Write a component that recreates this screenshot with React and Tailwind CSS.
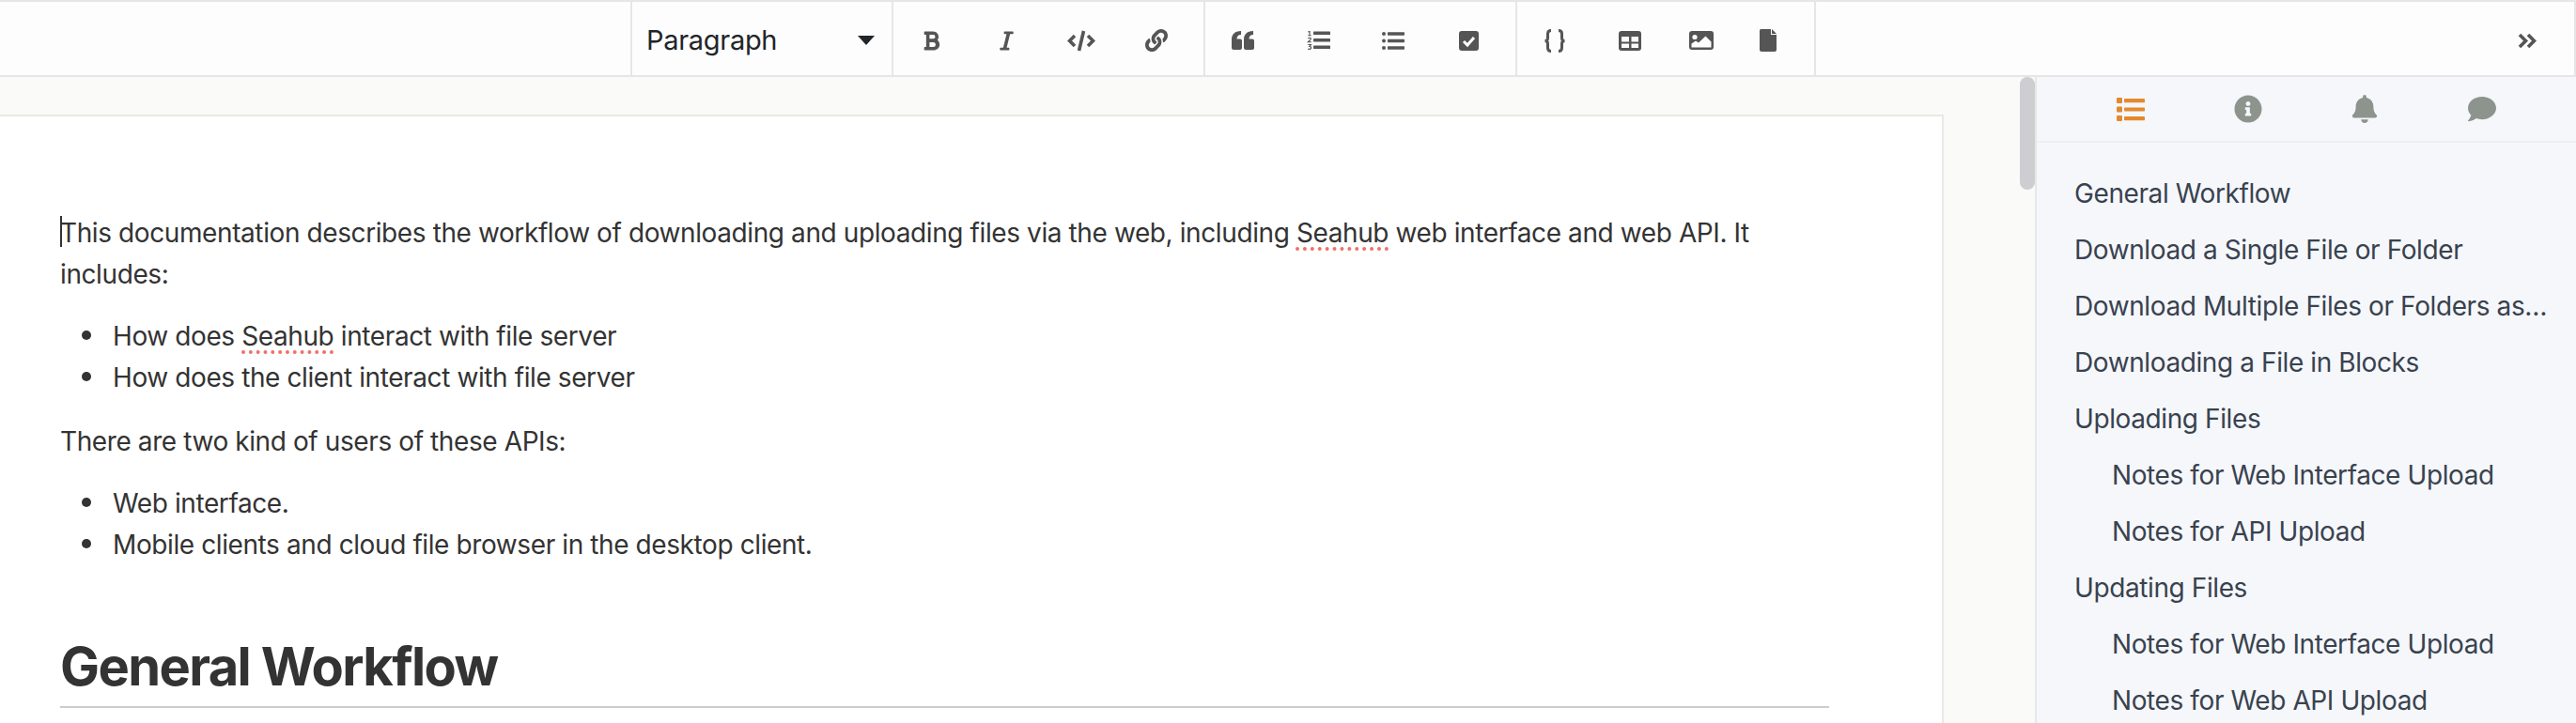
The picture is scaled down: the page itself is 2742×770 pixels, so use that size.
import React from "react";
import { FaBold, FaItalic, FaLink, FaInfoCircle, FaBell, FaComment } from "react-icons/fa";

const Btn = ({ w = "w-[80px]", children }) => (
  <button className={`${w} h-full flex items-center justify-center text-[#555555]`}>{children}</button>
);

const Code = () => (
  <svg width="30" height="23" viewBox="0 0 30 23" fill="none" stroke="currentColor" strokeWidth="3.6" strokeLinejoin="miter">
    <path d="M8 6 L2.5 11.5 L8 17" /><path d="M22 6 L27.5 11.5 L22 17" /><path d="M17.5 1 L12.5 22" />
  </svg>
);
const Quote = () => (
  <svg width="24" height="20" viewBox="0 0 24 20" fill="currentColor">
    <path d="M0 9 C0 4 3 0 10 0 V4 C7 4 5.5 6 5.5 8.5 H9 a2 2 0 0 1 2 2 V18 a2 2 0 0 1 -2 2 H2 a2 2 0 0 1 -2 -2 Z" />
    <path d="M13 9 C13 4 16 0 23 0 V4 C20 4 18.5 6 18.5 8.5 H22 a2 2 0 0 1 2 2 V18 a2 2 0 0 1 -2 2 H15 a2 2 0 0 1 -2 -2 Z" />
  </svg>
);
const ListOl = () => (
  <svg width="25" height="20" viewBox="0 0 25 20" fill="currentColor">
    <rect x="7" y="0.6" width="18" height="3.4" rx="0.6" /><rect x="7" y="8" width="18" height="3.4" rx="0.6" /><rect x="7" y="15.6" width="18" height="3.4" rx="0.6" />
    <path d="M1.5 1 L3 0 V4.5 M1.3 4.8 H4.7" stroke="currentColor" strokeWidth="1.1" fill="none" />
    <path d="M1.3 8 Q3 6.6 4.4 7.8 Q4.8 9 1.3 11.8 H4.8" stroke="currentColor" strokeWidth="1.1" fill="none" />
    <path d="M1.3 14.5 H4.5 L2.8 16.4 Q5.2 16.6 4.6 18.4 Q3.4 20 1.2 18.9" stroke="currentColor" strokeWidth="1.1" fill="none" />
  </svg>
);
const ListUl = () => (
  <svg width="24" height="19" viewBox="0 0 24 19" fill="currentColor">
    <circle cx="2" cy="2" r="2" /><circle cx="2" cy="9.5" r="2" /><circle cx="2" cy="17" r="2" />
    <rect x="6" y="0.3" width="18" height="3.4" rx="0.6" /><rect x="6" y="7.8" width="18" height="3.4" rx="0.6" /><rect x="6" y="15.3" width="18" height="3.4" rx="0.6" />
  </svg>
);
const Check = () => (
  <svg width="21" height="21" viewBox="0 0 21 21">
    <rect width="21" height="21" rx="3" fill="currentColor" />
    <path d="M5 11 L9 15 L16 7" fill="none" stroke="#ffffff" strokeWidth="3" />
  </svg>
);
const Braces = () => (
  <svg width="24" height="25" viewBox="0 0 24 25" fill="none" stroke="currentColor" strokeWidth="3">
    <path d="M8 1.5 C5 1.5 4.5 3 4.5 5 V9.5 C4.5 11.5 3.5 12.5 1.5 12.5 C3.5 12.5 4.5 13.5 4.5 15.5 V20 C4.5 22 5 23.5 8 23.5" />
    <path d="M16 1.5 C19 1.5 19.5 3 19.5 5 V9.5 C19.5 11.5 20.5 12.5 22.5 12.5 C20.5 12.5 19.5 13.5 19.5 15.5 V20 C19.5 22 19 23.5 16 23.5" />
  </svg>
);
const TableIcon = () => (
  <svg width="24" height="21" viewBox="0 0 24 21">
    <rect width="24" height="21" rx="3" fill="currentColor" />
    <g fill="#fdfdfd"><rect x="3" y="6" width="8" height="5.5" /><rect x="13.5" y="6" width="7.5" height="5.5" /><rect x="3" y="13.5" width="8" height="4.5" /><rect x="13.5" y="13.5" width="7.5" height="4.5" /></g>
  </svg>
);
const ImageIcon = () => (
  <svg width="26" height="20" viewBox="0 0 26 20">
    <rect width="26" height="20" rx="3" fill="currentColor" />
    <circle cx="6" cy="6.5" r="2.6" fill="#fdfdfd" />
    <path d="M2.5 17.5 V13.5 L7 10.5 L10 12.5 L17.5 5.5 L23.5 11.5 V17.5 Z" fill="#fdfdfd" />
  </svg>
);
const FileIcon = () => (
  <svg width="18" height="24" viewBox="0 0 18 24" fill="currentColor">
    <path d="M1.5 0 H12 V6 H18 V22 a2 2 0 0 1 -2 2 H2 a2 2 0 0 1 -2 -2 V1.5 a1.5 1.5 0 0 1 1.5 -1.5 Z" />
    <path d="M13 0 L18 5 H13 Z" />
  </svg>
);
const Chevrons = () => (
  <svg width="20" height="17" viewBox="0 0 20 17" fill="none" stroke="currentColor" strokeWidth="3.6">
    <path d="M2 2 L8.5 8.5 L2 15" /><path d="M11 2 L17.5 8.5 L11 15" />
  </svg>
);
const TocIcon = () => (
  <svg width="30" height="25" viewBox="0 0 30 25" fill="currentColor">
    <rect x="0" y="0" width="6" height="6" rx="1" /><rect x="0" y="9.5" width="6" height="6" rx="1" /><rect x="0" y="19" width="6" height="6" rx="1" />
    <rect x="8" y="1" width="22" height="4.2" rx="0.8" /><rect x="8" y="10.4" width="22" height="4.2" rx="0.8" /><rect x="8" y="20" width="22" height="4.2" rx="0.8" />
  </svg>
);

const Spell = ({ children }) => (
  <span className="underline decoration-dotted decoration-[#f0706a] decoration-[4px] underline-offset-[5px] [text-decoration-skip-ink:none]">{children}</span>
);

const Bullet = ({ children }) => (
  <li className="flex">
    <span className="w-[56px] shrink-0 pl-[23px] pt-[16px]"><span className="block w-[10px] h-[10px] rounded-full bg-[#333333]" /></span>
    <span>{children}</span>
  </li>
);

const toc = [
  ["General Workflow", 0],
  ["Download a Single File or Folder", 0],
  ["Download Multiple Files or Folders as a Zip", 0],
  ["Downloading a File in Blocks", 0],
  ["Uploading Files", 0],
  ["Notes for Web Interface Upload", 1],
  ["Notes for API Upload", 1],
  ["Updating Files", 0],
  ["Notes for Web Interface Upload", 1],
  ["Notes for Web API Upload", 1],
];

export default function App() {
  return (
    <div className="w-[2742px] h-[770px] overflow-hidden flex flex-col bg-[#fafaf8] font-['Inter','Noto_Sans',sans-serif]">
      <div className="h-[82px] shrink-0 flex bg-[#fdfdfd] border-t-2 border-b-2 border-r-2 border-[#e6e6e6]">
        <div className="w-[671px]" />
        <div className="w-[278px] border-l-2 border-[#e6e6e6] flex items-center pt-[4px] pl-[15px] pr-[18px] justify-between">
          <span className="text-[29px] tracking-[-0.3px] text-[#212529]">Paragraph</span>
          <span className="w-0 h-0 border-l-[9px] border-r-[9px] border-t-[10px] border-l-transparent border-r-transparent border-t-[#212529]" />
        </div>
        <div className="w-[332px] border-l-2 border-[#e6e6e6] flex pt-[4px]">
          <Btn><FaBold className="text-[23px]" /></Btn>
          <Btn><FaItalic className="text-[23px]" /></Btn>
          <Btn><Code /></Btn>
          <Btn><FaLink className="text-[24px]" /></Btn>
        </div>
        <div className="w-[332px] border-l-2 border-[#e6e6e6] flex pt-[4px]">
          <Btn><Quote /></Btn>
          <Btn><ListOl /></Btn>
          <Btn><ListUl /></Btn>
          <Btn><Check /></Btn>
        </div>
        <div className="w-[320px] border-l-2 border-r-2 border-[#e6e6e6] flex pt-[4px]">
          <Btn><Braces /></Btn>
          <Btn><TableIcon /></Btn>
          <Btn w="w-[72px]"><ImageIcon /></Btn>
          <Btn w="w-[70px]"><FileIcon /></Btn>
        </div>
        <div className="flex-1 flex justify-end items-center pt-[4px] pr-[40px] text-[#555555]"><Chevrons /></div>
      </div>
      <div className="flex flex-1 min-h-0">
        <div className="w-[2166px] shrink-0 flex relative pt-[40px]">
          <div className="w-[2069px] h-[800px] shrink-0 bg-white border-t-2 border-r-2 border-[#e8e8e4] pl-[64px] pr-[120px] pt-[102px] text-[#333333] text-[28px] leading-[44px] tracking-[-0.4px]">
            <p className="mb-[22px] relative">
              <span className="absolute left-0 top-[4px] w-[2px] h-[33px] bg-[#333333]" />
              This documentation describes the workflow of downloading and uploading files via the web, including <Spell>Seahub</Spell> web interface and web API. It includes:
            </p>
            <ul className="mb-[24px]">
              <Bullet>How does <Spell>Seahub</Spell> interact with file server</Bullet>
              <Bullet>How does the client interact with file server</Bullet>
            </ul>
            <p className="mb-[22px]">There are two kind of users of these APIs:</p>
            <ul className="mb-[72px]">
              <Bullet>Web interface.</Bullet>
              <Bullet>Mobile clients and cloud file browser in the desktop client.</Bullet>
            </ul>
            <h1 className="text-[56px] font-bold leading-[72px] tracking-[-1.6px] pb-[6px] border-b-2 border-[#cccccc]">General Workflow</h1>
          </div>
          <div className="absolute right-0 top-0 w-[16px] h-[120px] rounded-full bg-[#cdcdd2]" />
        </div>
        <div className="flex-1 min-w-0 bg-[#f5f7fb] border-l-2 border-[#e8e8e4]">
          <div className="h-[70px] border-b-2 border-[#eeeff2] flex items-center justify-between px-[85px] text-[#8d948e]">
            <span className="text-[#e38a2e]"><TocIcon /></span>
            <FaInfoCircle className="text-[30px]" />
            <FaBell className="text-[30px]" />
            <FaComment className="text-[30px]" />
          </div>
          <div className="pl-[40px] pr-[26px] pt-[24px]">
            {toc.map(([t, d], i) => (
              <div key={i} className={`h-[60px] leading-[60px] text-[28px] tracking-[-0.4px] text-[#39424e] truncate ${d ? "pl-[40px]" : ""}`}>{t}</div>
            ))}
          </div>
        </div>
      </div>
    </div>
  );
}
